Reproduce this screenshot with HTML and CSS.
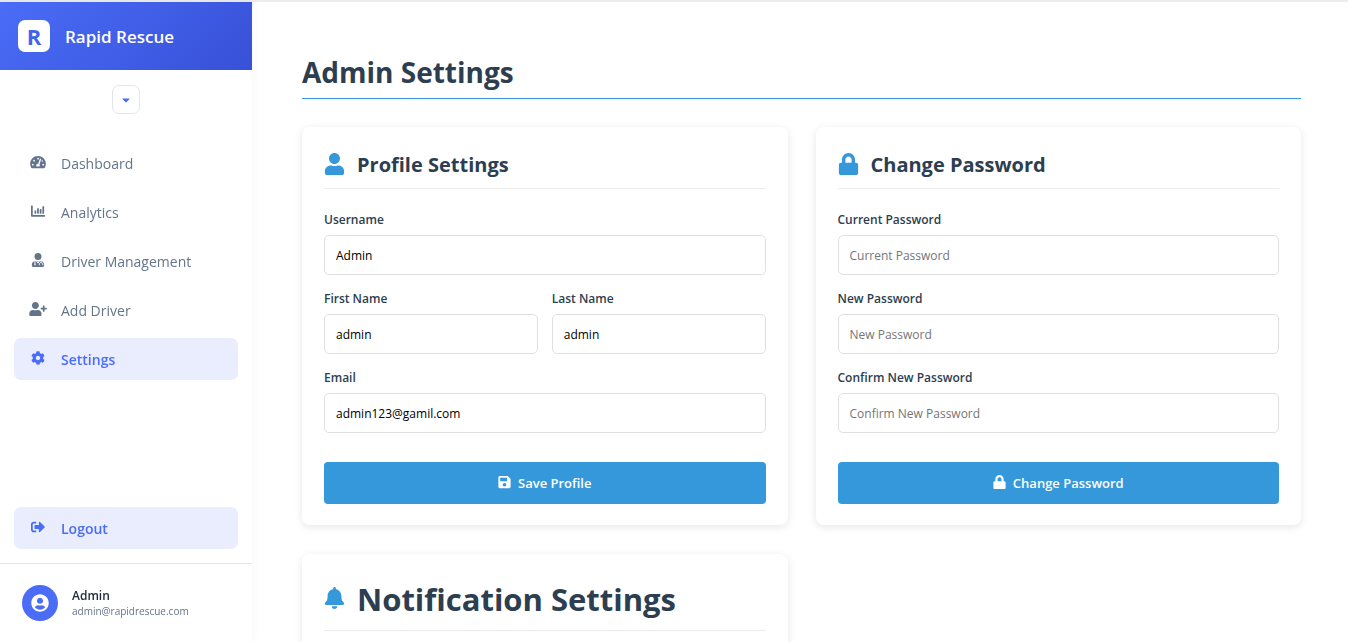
FILE: index.html
```html
<!DOCTYPE html>
<html lang="en">
<head>
<meta charset="utf-8">
<title>Rapid Rescue - Admin Settings</title>
<link rel="stylesheet" href="styles.css">
</head>
<body>
<svg class="sprite" aria-hidden="true">
  <symbol id="user" viewBox="0 0 448 512"><path d="M224 256c70.700 0 128-57.300 128-128S294.700 0 224 0 96 57.300 96 128s57.300 128 128 128zm89.600 32h-16.700c-22.200 10.200-46.900 16-72.900 16s-50.600-5.800-72.900-16h-16.700C60.200 288 0 348.200 0 422.400V464c0 26.500 21.500 48 48 48h352c26.500 0 48-21.500 48-48v-41.600c0-74.200-60.200-134.400-134.400-134.400z"/></symbol>
  <symbol id="lock" viewBox="0 0 448 512"><path d="M400 224h-24v-72C376 68.200 307.800 0 224 0S72 68.200 72 152v72H48c-26.500 0-48 21.500-48 48v192c0 26.500 21.500 48 48 48h352c26.500 0 48-21.500 48-48V272c0-26.500-21.500-48-48-48zm-104 0H152v-72c0-39.700 32.300-72 72-72s72 32.300 72 72v72z"/></symbol>
  <symbol id="bell" viewBox="0 0 448 512"><path d="M224 512c35.320 0 63.970-28.650 63.970-64H160.030c0 35.350 28.650 64 63.970 64zm215.390-149.710c-19.320-20.760-55.470-51.990-55.470-154.290 0-77.700-54.480-139.900-127.940-155.160V32c0-17.670-14.320-32-31.980-32s-31.980 14.330-31.980 32v20.840C118.560 68.100 64.080 130.300 64.080 208c0 102.300-36.150 133.530-55.470 154.290-6 6.450-8.660 14.160-8.610 21.710.11 16.400 12.980 32 32.100 32h383.800c19.120 0 32-15.600 32.100-32 .05-7.550-2.610-15.270-8.610-21.710z"/></symbol>
  <symbol id="save" viewBox="0 0 448 512"><path d="M433.941 129.941l-83.882-83.882A48 48 0 0 0 316.118 32H48C21.490 32 0 53.490 0 80v352c0 26.510 21.490 48 48 48h352c26.510 0 48-21.490 48-48V163.882a48 48 0 0 0-14.059-33.941zM224 416c-35.346 0-64-28.654-64-64 0-35.346 28.654-64 64-64s64 28.654 64 64c0 35.346-28.654 64-64 64zm96-304.520V212c0 6.627-5.373 12-12 12H76c-6.627 0-12-5.373-12-12V108c0-6.627 5.373-12 12-12h228.520c3.183 0 6.235 1.264 8.485 3.515l3.480 3.480A11.996 11.996 0 0 1 320 111.480z"/></symbol>
  <symbol id="cog" viewBox="0 0 512 512"><path d="M487.400 315.700l-42.600-24.600c4.300-23.200 4.300-47 0-70.200l42.600-24.600c4.900-2.800 7.100-8.600 5.500-14-11.100-35.600-30-67.800-54.700-94.600-3.800-4.100-10-5.100-14.800-2.300L380.800 110c-17.900-15.400-38.500-27.300-60.800-35.100V25.800c0-5.600-3.900-10.500-9.400-11.700-36.700-8.200-74.300-7.800-109.200 0-5.500 1.200-9.400 6.100-9.400 11.700V75c-22.200 7.900-42.800 19.800-60.800 35.100L88.700 85.500c-4.900-2.800-11-1.900-14.800 2.300-24.700 26.700-43.600 58.900-54.700 94.600-1.700 5.400.6 11.200 5.500 14L67.300 221c-4.300 23.200-4.300 47 0 70.200l-42.600 24.600c-4.900 2.800-7.100 8.600-5.500 14 11.100 35.600 30 67.800 54.700 94.600 3.800 4.100 10 5.100 14.800 2.300l42.600-24.600c17.900 15.400 38.500 27.300 60.800 35.100v49.200c0 5.600 3.900 10.500 9.400 11.700 36.700 8.200 74.300 7.800 109.200 0 5.500-1.200 9.400-6.100 9.400-11.700v-49.200c22.200-7.900 42.800-19.800 60.800-35.100l42.600 24.600c4.900 2.800 11 1.900 14.800-2.300 24.700-26.700 43.600-58.900 54.700-94.600 1.500-5.500-.7-11.300-5.600-14.100zM256 336c-44.100 0-80-35.900-80-80s35.900-80 80-80 80 35.900 80 80-35.900 80-80 80z"/></symbol>
  <symbol id="user-plus" viewBox="0 0 640 512"><path d="M624 208h-64v-64c0-8.800-7.200-16-16-16h-32c-8.800 0-16 7.200-16 16v64h-64c-8.800 0-16 7.200-16 16v32c0 8.800 7.200 16 16 16h64v64c0 8.800 7.200 16 16 16h32c8.800 0 16-7.200 16-16v-64h64c8.800 0 16-7.200 16-16v-32c0-8.800-7.200-16-16-16zm-400 48c70.700 0 128-57.300 128-128S294.700 0 224 0 96 57.300 96 128s57.300 128 128 128zm89.600 32h-16.700c-22.200 10.200-46.900 16-72.900 16s-50.600-5.800-72.900-16h-16.700C60.200 288 0 348.200 0 422.400V464c0 26.500 21.500 48 48 48h352c26.500 0 48-21.500 48-48v-41.600c0-74.200-60.200-134.400-134.400-134.400z"/></symbol>
  <symbol id="gauge" viewBox="0 0 576 512"><path d="M288 32C128.940 32 0 160.940 0 320c0 52.800 14.250 102.260 39.060 144.800 5.610 9.620 16.300 15.200 27.440 15.200h443c11.140 0 21.830-5.580 27.440-15.200C561.750 422.260 576 372.800 576 320c0-159.060-128.940-288-288-288z"/><g fill="#fff"><circle cx="96" cy="352" r="32"/><circle cx="144" cy="208" r="32"/><circle cx="288" cy="128" r="32"/><circle cx="480" cy="352" r="32"/><circle cx="444" cy="220" r="26"/><path d="M360 132l46 15-62 188c14 18 12 62 0 81H232c-18-34-8-92 50-96l16-2z"/></g></symbol>
  <symbol id="chart" viewBox="0 0 512 512"><path d="M13 52h38q13 0 13 13v335h435q13 0 13 13v38q0 13-13 13H32q-32 0-32-32V65q0-13 13-13zM141 236h38q13 0 13 13v90q0 13-13 13h-38q-13 0-13-13v-90q0-13 13-13zm96-84h38q13 0 13 13v174q0 13-13 13h-38q-13 0-13-13V165q0-13 13-13zm96 32h38q13 0 13 13v142q0 13-13 13h-38q-13 0-13-13V197q0-13 13-13zm96-104h38q13 0 13 13v246q0 13-13 13h-38q-13 0-13-13V93q0-13 13-13z"/></symbol>
  <symbol id="driver" viewBox="0 0 448 512"><circle cx="224" cy="128" r="128"/><path d="M112 290c-64 10-112 62-112 132v48c0 24 18 42 42 42h364c24 0 42-18 42-42v-48c0-70-48-122-112-132L224 308z"/><path fill="none" stroke="#fff" stroke-width="34" d="M112 286v122M336 286v64M272 448v-42c0-74 128-74 128 0v42M176 300l48 70 48-70"/><circle cx="112" cy="430" r="28" fill="#fff"/></symbol>
  <symbol id="logout" viewBox="0 0 512 512"><path d="M497 273L329 441c-15 15-41 4.500-41-17v-96H152c-13.300 0-24-10.700-24-24v-96c0-13.300 10.700-24 24-24h136V88c0-21.400 25.900-32 41-17l168 168c9.300 9.400 9.300 24.600 0 34zM192 436v-40c0-6.600-5.400-12-12-12H96c-17.700 0-32-14.300-32-32V160c0-17.700 14.300-32 32-32h84c6.600 0 12-5.400 12-12V76c0-6.600-5.400-12-12-12H96c-53 0-96 43-96 96v192c0 53 43 96 96 96h84c6.600 0 12-5.400 12-12z"/></symbol>
  <symbol id="avatar" viewBox="0 0 496 512"><path d="M248 8C111 8 0 119 0 256s111 248 248 248 248-111 248-248S385 8 248 8zm0 96c48.600 0 88 39.400 88 88s-39.400 88-88 88-88-39.400-88-88 39.400-88 88-88zm0 344c-58.700 0-111.300-26.600-146.500-68.200 18.800-35.400 55.600-59.800 98.500-59.800 2.400 0 4.800.4 7.100 1.100 13 4.200 26.600 6.900 40.900 6.900 14.300 0 28-2.700 40.900-6.900 2.300-.7 4.700-1.100 7.100-1.100 42.900 0 79.700 24.400 98.500 59.800C359.300 421.400 306.700 448 248 448z"/></symbol>
  <symbol id="caret" viewBox="0 0 320 512"><path d="M31.300 192h257.300c17.800 0 26.700 21.500 14.100 34.100L174.100 354.800c-7.800 7.800-20.500 7.800-28.300 0L17.200 226.100C4.600 213.500 13.500 192 31.300 192z"/></symbol>
</svg>
<div class="app">
  <aside class="sidebar">
    <div class="brand"><span class="brand-logo">R</span><span class="brand-name">Rapid Rescue</span></div>
    <button class="collapse" type="button" aria-label="Toggle menu"><svg><use href="#caret"/></svg></button>
    <nav class="menu">
      <a class="menu-link" href="#"><svg><use href="#gauge"/></svg>Dashboard</a>
      <a class="menu-link" href="#"><svg><use href="#chart"/></svg>Analytics</a>
      <a class="menu-link" href="#"><svg><use href="#driver"/></svg>Driver Management</a>
      <a class="menu-link" href="#"><svg><use href="#user-plus"/></svg>Add Driver</a>
      <a class="menu-link active" href="#"><svg><use href="#cog"/></svg>Settings</a>
    </nav>
    <div class="logout"><a class="menu-link active" href="#"><svg><use href="#logout"/></svg>Logout</a></div>
    <div class="account">
      <span class="avatar"><svg><use href="#avatar"/></svg></span>
      <div><div class="account-name">Admin</div><div class="account-mail">admin@rapidrescue.com</div></div>
    </div>
  </aside>
  <main class="content">
    <h1 class="page-title">Admin Settings</h1>
    <div class="cards">
      <section class="card">
        <h2 class="card-title"><svg><use href="#user"/></svg>Profile Settings</h2>
        <form class="form">
          <div class="field"><label for="username">Username</label><input id="username" type="text" value="Admin"></div>
          <div class="field-row">
            <div class="field"><label for="first">First Name</label><input id="first" type="text" value="admin"></div>
            <div class="field"><label for="last">Last Name</label><input id="last" type="text" value="admin"></div>
          </div>
          <div class="field"><label for="email">Email</label><input id="email" type="email" value="admin123@gamil.com"></div>
          <button class="submit" type="button"><svg><use href="#save"/></svg>Save Profile</button>
        </form>
      </section>
      <section class="card">
        <h2 class="card-title"><svg><use href="#lock"/></svg>Change Password</h2>
        <form class="form">
          <div class="field"><label for="current">Current Password</label><input id="current" type="password" placeholder="Current Password"></div>
          <div class="field"><label for="new">New Password</label><input id="new" type="password" placeholder="New Password"></div>
          <div class="field"><label for="confirm">Confirm New Password</label><input id="confirm" type="password" placeholder="Confirm New Password"></div>
          <button class="submit" type="button"><svg><use href="#lock"/></svg>Change Password</button>
        </form>
      </section>
      <section class="card">
        <h2 class="card-title large"><svg><use href="#bell"/></svg>Notification Settings</h2>
      </section>
    </div>
  </main>
</div>
</body>
</html>
```
FILE: styles.css
```css
* { box-sizing: border-box; }
body { margin: 0; background: #fff; color: #2c3e50; font-family: "Segoe UI", "Open Sans", "Noto Sans", sans-serif; font-size: 12px; }
svg { fill: currentColor; flex: none; }
.sprite { display: none; }
h1, h2 { margin: 0; }

.app { display: flex; height: 100vh; border-top: 2px solid #ececee; background: #f5f5f6; }
.sidebar { position: relative; z-index: 1; display: flex; flex-direction: column; flex: none; width: 252px; background: #fff; box-shadow: 0 0 9px rgba(0, 0, 0, .05); }
.brand { display: flex; align-items: center; gap: 15px; height: 68px; padding: 0 18px; background: linear-gradient(135deg, #4a6cf7, #3751d7); color: #fff; }
.brand-logo { display: grid; place-items: center; width: 32px; height: 32px; border-radius: 7px; background: #fff; color: #4263eb; font-size: 22px; font-weight: 700; line-height: 32px; }
.brand-name { font-size: 17px; font-weight: 600; }
.collapse { display: grid; place-items: center; align-self: center; width: 28px; height: 29px; margin: 15px 0 28px; padding: 0; border: 1px solid #e2e5f0; border-radius: 7px; background: #fff; color: #4a6cf7; }
.collapse svg { width: 8px; height: 12px; }
.menu { display: flex; flex-direction: column; gap: 7px; flex: 1; padding: 0 14px; }
.menu-link { display: flex; align-items: center; gap: 13px; height: 42px; padding: 0 14px; border-radius: 7px; color: #64748b; font-size: 14px; text-decoration: none; }
.menu-link svg { width: 20px; height: 14px; margin-bottom: 2px; }
.menu-link.active { background: #e9edfe; color: #4a6cf7; font-weight: 600; }
.logout { padding: 0 14px 14px; }
.account { display: flex; align-items: center; gap: 14px; height: 79px; padding: 0 22px; border-top: 1px solid #e2e5ea; }
.avatar { display: grid; place-items: center; width: 36px; height: 36px; border-radius: 50%; background: #4a6cf7; color: #fff; }
.avatar svg { width: 18px; height: 18px; }
.account-name { color: #1e293b; font-size: 12px; font-weight: 600; line-height: 16px; }
.account-mail { color: #64748b; font-size: 10px; line-height: 15px; }

.content { flex: 1; min-width: 0; padding: 50px 47px 50px 50px; overflow-y: auto; scrollbar-width: none; border-top-left-radius: 8px; background: #fff; }
.page-title { padding-bottom: 5px; border-bottom: 1px solid #3498db; font-size: 28px; font-weight: 700; line-height: 41px; margin-bottom: 28px; }
.cards { display: grid; grid-template-columns: 1fr 1fr; gap: 29px 28px; }
.card { padding: 22px 22px 21px; border-radius: 8px; background: #fff; box-shadow: 0 2px 9px rgba(0, 0, 0, .1); }
.card-title { display: flex; align-items: center; gap: 12px; padding-bottom: 8px; border-bottom: 1px solid #ececec; font-size: 20px; font-weight: 700; line-height: 31px; }
.card-title svg { width: 21px; height: 22px; margin-bottom: 2px; color: #3498db; }
.card-title.large { font-size: 31px; line-height: 46px; }
.form { display: flex; flex-direction: column; gap: 14px; padding-top: 21px; }
.field-row { display: grid; grid-template-columns: 1fr 1fr; gap: 14px; }
.field label { display: block; margin-bottom: 6px; font-weight: 600; line-height: 19px; }
.field input { display: block; width: 100%; height: 40px; padding: 0 11px; border: 1px solid #e0e0e0; border-radius: 5px; background: #fff; color: #000; font: inherit; }
.field input::placeholder { color: #757575; }
.submit { display: flex; align-items: center; justify-content: center; gap: 7px; height: 42px; margin-top: 15px; border: 0; border-radius: 4px; background: #3498db; color: #fff; font: inherit; font-size: 13px; font-weight: 600; }
.submit svg { width: 13px; height: 14px; margin-bottom: 2px; }
```
